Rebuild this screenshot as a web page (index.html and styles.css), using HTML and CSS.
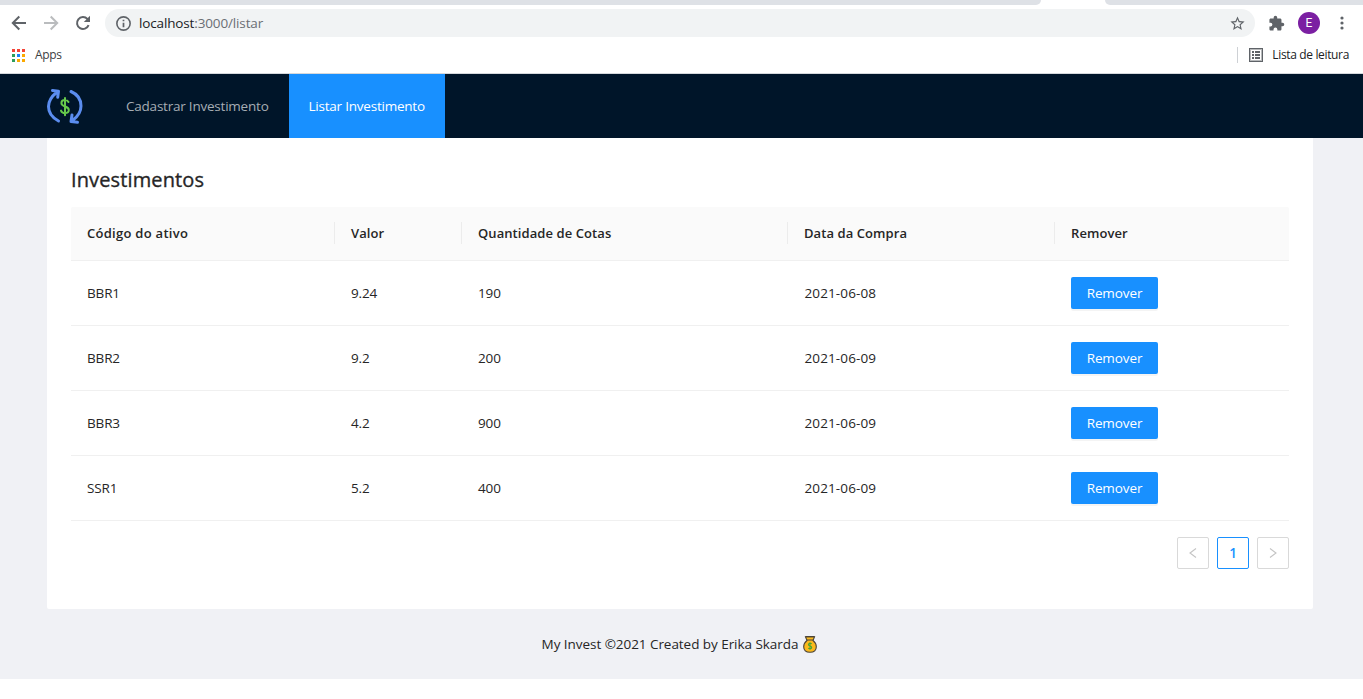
FILE: index.html
```html
<!DOCTYPE html>
<html lang="pt-BR">
<head>
<meta charset="utf-8">
<title>My Invest</title>
<link rel="stylesheet" href="styles.css">
</head>
<body>
<div class="browser">
  <div class="tabs"><span class="tab-left"></span><span class="tab-right"></span></div>
  <div class="toolbar">
    <svg class="nav-icon back" viewBox="0 0 16 16"><path d="M15 8H2M8.300 1.500 1.800 8l6.500 6.500" fill="none" stroke="#5f6368" stroke-width="2"/></svg>
    <svg class="nav-icon forward" viewBox="0 0 16 16"><path d="M1 8h13M7.700 1.500 14.200 8l-6.500 6.500" fill="none" stroke="#babcbe" stroke-width="2"/></svg>
    <svg class="nav-icon reload" viewBox="0 0 16 16"><path d="M13.600 10.200A6 6 0 1 1 12.400 3.900L14 5.500" fill="none" stroke="#5f6368" stroke-width="2"/><path d="M15 .8V7H8.800z" fill="#5f6368"/></svg>
    <div class="address">
      <svg class="info" viewBox="0 0 14 14"><circle cx="7" cy="7" r="6.200" fill="none" stroke="#5f6368" stroke-width="1.500"/><path d="M7 6.200v4.200M7 3.400v1.600" stroke="#5f6368" stroke-width="1.600"/></svg>
      <span class="url">localhost<span class="path">:3000/listar</span></span>
      <svg class="star" viewBox="0 0 24 24"><path fill="#5f6368" d="M22 9.240l-7.190-.62L12 2 9.190 8.630 2 9.240l5.460 4.730L5.820 21 12 17.270 18.180 21l-1.630-7.030L22 9.240zM12 15.400l-3.760 2.270 1-4.280-3.320-2.880 4.380-.38L12 6.100l1.710 4.040 4.380.38-3.320 2.880 1 4.280L12 15.400z"/></svg>
    </div>
    <svg class="puzzle" viewBox="0 0 24 24"><path fill="#5f6368" d="M20.500 11H19V7c0-1.100-.9-2-2-2h-4V3.500a2.500 2.500 0 0 0-5 0V5H4c-1.100 0-2 .9-2 2v3.800h1.500a2.700 2.700 0 0 1 0 5.400H2V20c0 1.100.9 2 2 2h3.800v-1.500a2.700 2.700 0 0 1 5.400 0V22H17c1.100 0 2-.9 2-2v-4h1.500a2.500 2.500 0 0 0 0-5z"/></svg>
    <span class="avatar">E</span>
    <svg class="dots" viewBox="0 0 4 14"><g fill="#5f6368"><circle cx="2" cy="2" r="1.600"/><circle cx="2" cy="7" r="1.600"/><circle cx="2" cy="12" r="1.600"/></g></svg>
  </div>
  <div class="bookmarks">
    <svg class="apps" viewBox="0 0 13 13" shape-rendering="crispEdges"><path fill="#f44336" d="M0 0h3v3H0zM5 0h3v3H5zM10 0h3v3h-3z"/><path fill="#2e9e5b" d="M0 5h3v3H0zM0 10h3v3H0z"/><path fill="#1a82f7" d="M5 5h3v3H5z"/><path fill="#fba900" d="M10 5h3v3h-3zM5 10h3v3H5zM10 10h3v3h-3z"/></svg>
    <span class="apps-label">Apps</span>
    <div class="reading">
      <svg class="list" viewBox="0 0 14 14" shape-rendering="crispEdges"><path fill="none" stroke="#5f6368" d="M.5.5h13v13H.5z"/><path fill="none" stroke="#5f6368" stroke-opacity=".45" d="M1.500 1.500h11v11h-11z"/><path fill="#5f6368" d="M3 3h2v2H3zM6 3h5v2H6zM3 6h2v2H3zM6 6h5v2H6zM3 9h2v2H3zM6 9h5v2H6z"/></svg>
      <span class="reading-label">Lista de leitura</span>
    </div>
  </div>
</div>
<div class="layout">
  <header class="header">
    <svg class="logo" viewBox="0 0 36 36">
      <g fill="none" stroke="#5b8def" stroke-width="3" stroke-linecap="round" stroke-linejoin="round">
        <path d="M11.500 33C5 29.500 1.500 24.500 1.500 18.500S4.500 8.500 10 4M5.500 2.500l6 .7-.8 6"/>
        <path d="M24 3.500c7 3 10 9 10 14.500S31 28.500 25.500 32.500M25 27l-1 6.500 6.500.8"/>
      </g>
      <path d="M21.500 14c-.7-1.500-2-2-3.600-2-2.100 0-3.500 1.200-3.500 3 0 4.500 7.400 2.500 7.400 7 0 1.900-1.600 3.100-3.800 3.100-2 0-3.400-.9-4-2.500M18 10v17.200" fill="none" stroke="#66c94b" stroke-width="2" stroke-linecap="round"/>
    </svg>
    <nav class="menu"><a class="item">Cadastrar Investimento</a><a class="item active">Listar Investimento</a></nav>
  </header>
  <main class="content">
    <h1 class="title">Investimentos</h1>
    <div class="table">
      <div class="row head"><span class="code">Código do ativo</span><span>Valor</span><span>Quantidade de Cotas</span><span>Data da Compra</span><span>Remover</span></div>
      <div class="row"><span>BBR1</span><span>9.24</span><span>190</span><span class="date">2021-06-08</span><span><button class="remove">Remover</button></span></div>
      <div class="row"><span>BBR2</span><span>9.2</span><span>200</span><span class="date">2021-06-09</span><span><button class="remove">Remover</button></span></div>
      <div class="row"><span>BBR3</span><span>4.2</span><span>900</span><span class="date">2021-06-09</span><span><button class="remove">Remover</button></span></div>
      <div class="row"><span>SSR1</span><span>5.2</span><span>400</span><span class="date">2021-06-09</span><span><button class="remove">Remover</button></span></div>
    </div>
    <div class="pagination">
      <span class="page"><svg class="chevron" viewBox="0 0 8 12"><path d="M7 1.500 1 6l6 4.500"/></svg></span>
      <span class="page current">1</span>
      <span class="page"><svg class="chevron" viewBox="0 0 8 12"><path d="M1 1.500 7 6l-6 4.500"/></svg></span>
    </div>
  </main>
  <footer class="footer">
    <span class="credit">My Invest ©2021 Created by Erika Skarda</span>
    <svg class="bag" viewBox="0 0 14 17"><path d="M4 4.500C1.500 6.500.7 8.500.7 10.800c0 3.500 2.500 5.500 6.300 5.500s6.300-2 6.300-5.500c0-2.300-.8-4.300-3.300-6.300l1.500-3.800h-9z" fill="#fbb91c" stroke="#4a4338" stroke-width="1.100"/><path d="M2.500.7h9M3.700 4h6.600" stroke="#4a4338" stroke-width="1.200"/><path d="M8.700 7.800C7.500 6.800 5.400 7.300 5.400 8.700c0 1.700 3.300 1 3.300 2.700 0 1.400-2.200 1.700-3.500.7M7 6.200v7.500" fill="none" stroke="#4aa532" stroke-width="1.100"/></svg>
  </footer>
</div>
</body>
</html>
```
FILE: styles.css
```css
* { box-sizing: border-box; }
body { margin: 0; background: #fff; color: #262626; font: 13.5px/22px "Open Sans", "Noto Sans", sans-serif; }
svg { display: block; flex: none; }

.browser { height: 74px; border-bottom: 1px solid #d5d8dc; background: #fff; }
.tabs { height: 5px; display: flex; justify-content: space-between; }
.tab-left { width: 1041px; background: #dee1e6; border-bottom-right-radius: 5px; }
.tab-right { width: 258px; background: #dee1e6; border-bottom-left-radius: 5px; }
.toolbar { height: 36px; display: flex; align-items: center; padding-left: 11px; }
.nav-icon { width: 16px; height: 16px; margin-right: 16px; }
.address { width: 1150px; height: 28px; margin-left: -2px; padding: 0 9px 0 10.5px; border-radius: 14px; background: #f1f3f4; display: flex; align-items: center; }
.info { width: 15px; height: 15px; margin-right: 8.5px; }
.url { color: #202124; letter-spacing: -.14px; }
.path { color: #6b6f74; }
.star { width: 17px; height: 17px; margin-left: auto; }
.puzzle { width: 17px; height: 17px; margin-left: 13px; }
.avatar { width: 22px; height: 22px; margin-left: 13px; border-radius: 50%; background: #7b1fa2; color: #fff; font: 12px/22px Roboto, sans-serif; text-align: center; }
.dots { width: 4px; height: 14px; margin-left: 20px; }
.bookmarks { height: 32px; display: flex; align-items: center; padding: 0 14px 4px 12px; font-size: 12px; }
.apps { width: 13px; height: 13px; }
.apps-label { margin-left: 10px; letter-spacing: -.3px; color: #3c4043; }
.reading { height: 16px; margin-left: auto; padding-left: 11px; border-left: 1px solid #ced1d5; display: flex; align-items: center; }
.list { width: 14px; height: 14px; }
.reading-label { margin-left: 9px; letter-spacing: -.35px; color: #202124; }

.layout { height: 605px; background: #f0f1f5; }
.header { height: 64px; background: #001529; display: flex; align-items: center; padding-left: 47px; }
.logo { width: 36px; height: 36px; margin-right: 23px; }
.menu { display: flex; }
.item { height: 64px; line-height: 64px; padding-left: 20px; width: 183px; color: #a6adb4; white-space: nowrap; letter-spacing: -.22px; }
.item.active { width: 156px; padding-left: 19.5px; background: #1890ff; color: #fff; }

.content { height: 471px; margin: 0 50px 0 47px; padding: 24px; background: #fff; border-radius: 0 0 2px 2px; }
.title { margin: 0 0 10px; font-size: 20px; line-height: 35px; font-weight: 500; letter-spacing: .13px; -webkit-text-stroke: .35px #262626; }
.row { height: 65px; display: grid; grid-template-columns: 264px 127px 326px 267px 1fr; align-items: center; border-bottom: 1px solid #f0f0f0; letter-spacing: -.15px; }
.row > span { padding-left: 16px; }
.row > .date { padding-left: 16.5px; letter-spacing: .12px; }
.head { height: 54px; padding-bottom: 2px; background: #fafafa; font-size: 13px; font-weight: 600; letter-spacing: .08px; border-radius: 2px 2px 0 0; }
.head > .code { letter-spacing: .28px; }
.head > span + span { border-left: 1px solid #ececec; margin-left: -1px; }
.remove { display: block; width: 87px; height: 32px; border: 0; border-radius: 2px; padding: 0; background: #1890ff; color: #fff; font: inherit; letter-spacing: -.1px; box-shadow: 0 2px 0 rgba(0,0,0,.045); }
.pagination { display: flex; justify-content: flex-end; gap: 8px; margin-top: 16px; }
.page { width: 32px; height: 32px; border: 1px solid #d9d9d9; border-radius: 2px; display: flex; align-items: center; justify-content: center; }
.current { border-color: #1890ff; color: #1890ff; font-weight: 600; }
.chevron { width: 8px; height: 12px; fill: none; stroke: #c4c4c4; stroke-width: 1.100; }
.footer { height: 70px; display: flex; align-items: center; justify-content: center; gap: 5px; padding-right: 4px; }
.credit { letter-spacing: -.05px; }
.bag { width: 14px; height: 17px; }
```
